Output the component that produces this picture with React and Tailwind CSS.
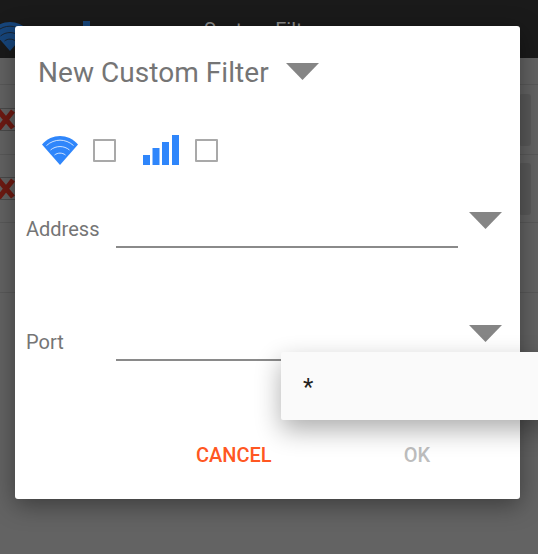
const Caret = ({ className }) => (
  <svg width="33" height="17" viewBox="0 0 33 17" className={className}>
    <path d="M0 0H33L16.5 17Z" fill="#858585" />
  </svg>
);

const WifiIcon = ({ className, color = "#2f86fb", gap = "#ffffff" }) => (
  <svg width="36" height="29" viewBox="0 0 36 29" className={className}>
    <path d="M0 8.5C10 -2.8 26 -2.8 36 8.5L18 29Z" fill={color} />
    <g fill="none" stroke={gap} strokeWidth="0.9" strokeOpacity="0.85">
      <path d="M4.5 9.5C12.5 2.4 23.5 2.4 31.5 9.5" />
      <path d="M8.5 14C14 9.4 22 9.4 27.5 14" />
      <path d="M12.5 19C15.8 16.5 20.2 16.5 23.5 19" />
    </g>
  </svg>
);

const BarsIcon = ({ className }) => (
  <svg width="36" height="30" viewBox="0 0 36 30" className={className}>
    <rect x="0" y="20" width="7" height="10" fill="#2f86fb" />
    <rect x="9.5" y="13" width="7" height="17" fill="#2f86fb" />
    <rect x="19" y="7" width="7" height="23" fill="#2f86fb" />
    <rect x="29" y="0" width="7" height="30" fill="#2f86fb" />
  </svg>
);

const Checkbox = () => (
  <div className="w-[23px] h-[23px] border-2 border-[#a9a9a9] rounded-[1px] bg-white shrink-0" />
);

const RedX = () => (
  <svg width="16" height="22" viewBox="0 0 16 22" className="shrink-0">
    <path d="M-3 0L13 19M13 2L-3 22" stroke="#6e1a12" strokeWidth="5" fill="none" />
  </svg>
);

const BackRow = ({ height, hasX }) => (
  <div
    className="flex items-center justify-between border-b border-[#595959]"
    style={{ height }}
  >
    {hasX ? (
      <div className="flex items-center w-[15px] h-[23px] border-y border-[#4a4a4a] overflow-hidden">
        <RedX />
      </div>
    ) : (
      <div />
    )}
    {hasX && <div className="w-[12px] h-[52px] mr-[7px] rounded-[3px] bg-[#595959]" />}
  </div>
);

const FieldRow = ({ label, className }) => (
  <div className={`flex items-start ${className}`}>
    <span className="w-[101px] pl-[11px] pt-[2px] text-[20px] leading-[26px] text-[#757575] shrink-0">
      {label}
    </span>
    <div className="w-[342px] h-[34px] border-b-2 border-[#8a8a8a] shrink-0" />
    <Caret className="ml-[11px] mt-[-2px] shrink-0" />
  </div>
);

export default function App() {
  return (
    <div className="relative w-[538px] h-[554px] overflow-hidden bg-[#636363] font-['Roboto',sans-serif]">
      {/* dimmed screen behind the dialog */}
      <div className="flex items-start h-[58px] bg-[#1a1a1a] overflow-hidden">
        <WifiIcon className="ml-[-8px] mt-[22px] shrink-0" color="#17467c" gap="#1a1a1a" />
        <div className="ml-[55px] mt-[21px] w-[7px] h-[30px] bg-[#17467c] shrink-0" />
        <span className="ml-[114px] mt-[17px] text-[20px] leading-[26px] text-[#8c8c8c] whitespace-nowrap">
          System Filter
        </span>
      </div>
      <BackRow height={27} />
      <BackRow height={70} hasX />
      <BackRow height={68} hasX />
      <BackRow height={70} />

      {/* dialog */}
      <div className="absolute left-[15px] top-[26px] w-[505px] h-[473px] bg-white rounded-[3px] shadow-[0_6px_24px_rgba(0,0,0,0.4)]">
        <div className="flex items-center pl-[23px] pt-[29px]">
          <h1 className="text-[28px] leading-[36px] font-normal tracking-[0.05px] text-[#757575]">New Custom Filter</h1>
          <Caret className="ml-[17px] mt-[-3px]" />
        </div>
        <div className="flex items-center pl-[27px] mt-[44px] h-[30px]">
          <WifiIcon />
          <div className="ml-[15px]">
            <Checkbox />
          </div>
          <BarsIcon className="ml-[27px]" />
          <div className="ml-[16px]">
            <Checkbox />
          </div>
        </div>
        <FieldRow label="Address" className="mt-[49px]" />
        <FieldRow label="Port" className="mt-[79px]" />
        <div className="flex mt-[81px] text-[20px] leading-[26px] font-medium">
          <span className="ml-[181px] text-[#ff5722]">CANCEL</span>
          <span className="ml-[132px] text-[#bdbdbd]">OK</span>
        </div>
      </div>

      {/* open dropdown */}
      <div className="absolute left-[281px] top-[352px] w-[270px] h-[68px] flex items-center pl-[22px] bg-[#fafafa] rounded-[2px] shadow-[0_10px_26px_rgba(0,0,0,0.32)]">
        <span className="text-[24px] leading-[30px] text-[#222222] mt-[2px]">*</span>
      </div>
    </div>
  );
}
